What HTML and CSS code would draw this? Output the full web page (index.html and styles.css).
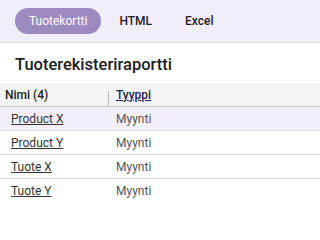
FILE: index.html
```html
<!DOCTYPE html>
<html lang="fi">
<head>
<meta charset="utf-8">
<title>Tuoterekisteriraportti</title>
<link rel="stylesheet" href="styles.css">
</head>
<body>
<div class="toolbar">
  <button class="tab active">Tuotekortti</button>
  <button class="tab">HTML</button>
  <button class="tab">Excel</button>
</div>
<h1 class="title">Tuoterekisteriraportti</h1>
<table class="grid">
  <thead>
    <tr>
      <th class="col-name">Nimi (4)</th>
      <th class="col-type"><span class="sort">Tyyppi</span></th>
    </tr>
  </thead>
  <tbody>
    <tr class="hl"><td class="col-name"><a>Product X</a></td><td class="col-type">Myynti</td></tr>
    <tr><td class="col-name"><a>Product Y</a></td><td class="col-type">Myynti</td></tr>
    <tr><td class="col-name"><a>Tuote X</a></td><td class="col-type">Myynti</td></tr>
    <tr class="last"><td class="col-name"><a>Tuote Y</a></td><td class="col-type">Myynti</td></tr>
  </tbody>
</table>
</body>
</html>
```
FILE: styles.css
```css
html, body {
  margin: 0;
  padding: 0;
  background: #ffffff;
  font-family: Roboto, "Open Sans", sans-serif;
  color: #222;
}
.toolbar {
  display: flex;
  align-items: center;
  gap: 3px;
  height: 42px;
  padding: 0 0 0 15px;
  background: #f2eef8;
  border-bottom: 1px solid #dcd8e2;
}
.tab {
  border: none;
  background: transparent;
  font-family: inherit;
  font-size: 12px;
  font-weight: 500;
  color: #1e1e2a;
  height: 26px;
  padding: 0 15px;
  border-radius: 13px;
}
.tab.active {
  background: #9b8bc1;
  color: #fff;
  font-weight: 400;
  padding: 0 14px;
}
.title {
  margin: 0;
  padding: 10px 15px 7px;
  font-size: 16.5px;
  line-height: 23px;
  font-weight: 500;
  color: #1c1c1c;
}
.grid {
  width: 100%;
  border-collapse: collapse;
  font-size: 12px;
}
.grid th {
  background: #f4f4f4;
  text-align: left;
  font-weight: 500;
  height: 23px;
  padding: 0;
  border-bottom: 1px solid #c9c9c9;
  color: #222;
}
.grid th.col-name {
  padding-left: 5px;
  width: 104px;
  position: relative;
}
.grid th.col-name::after {
  content: "";
  position: absolute;
  right: 0;
  top: 8px;
  bottom: 0;
  width: 1px;
  background: #bdbdbd;
}
.grid th.col-type { padding-left: 7px; }
.sort {
  color: #1e2250;
  text-decoration: underline;
}
.grid td {
  height: 23px;
  padding: 0;
  border-bottom: 1px solid #dedede;
}
.grid tr.last td { border-bottom: none; }
.grid tr.hl td { background: #f3eef8; }
.grid td.col-name { padding-left: 11px; }
.grid td.col-type { padding-left: 7px; color: #555; }
.grid a {
  color: #333;
  text-decoration: underline;
}
```
